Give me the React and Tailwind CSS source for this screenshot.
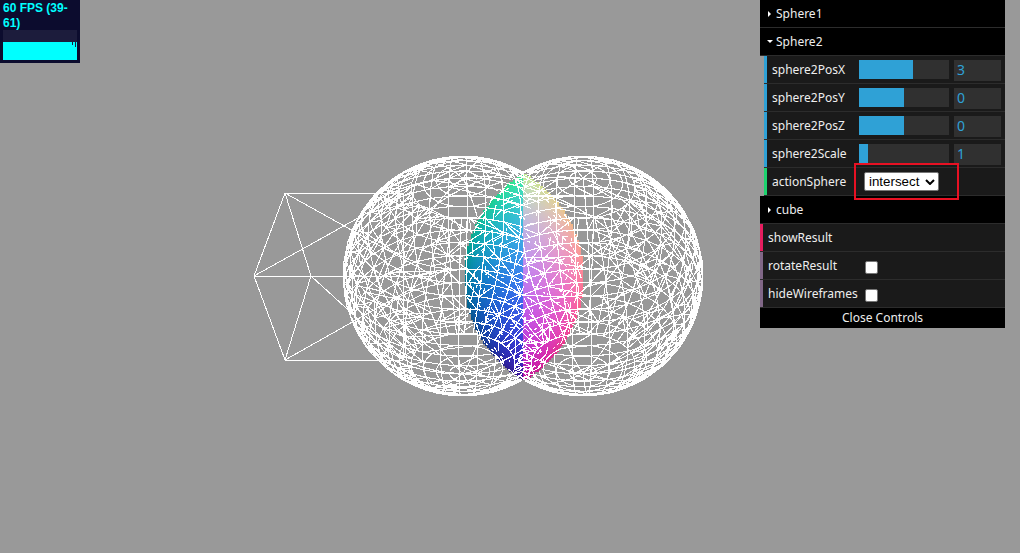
import { useMemo } from 'react';

const R = 120;
const C1 = 463;
const C2 = 583;
const CY = 276;

const rows = [
    { label: 'sphere2PosX', value: '3', fill: 'w-[54px]' },
    { label: 'sphere2PosY', value: '0', fill: 'w-[45px]' },
    { label: 'sphere2PosZ', value: '0', fill: 'w-[45px]' },
    { label: 'sphere2Scale', value: '1', fill: 'w-[9px]' },
];

// small seeded random so the mesh is the same on every render
const makeRandom = (seed) => () => {
    seed = (seed * 16807) % 2147483647;
    return seed / 2147483647;
};

const sphereEdges = (cx, seed) => {
    const rnd = makeRandom(seed);
    const W = 40;
    const H = 28;
    const tilt = 0.62;
    const spin = seed % 7;
    const pt = (i, j) => {
        const th = (j / H) * Math.PI;
        const ph = (i / W) * Math.PI * 2 + spin * 0.07;
        const x = Math.sin(th) * Math.cos(ph);
        const y = Math.cos(th);
        const z = Math.sin(th) * Math.sin(ph);
        const y2 = y * Math.cos(tilt) - z * Math.sin(tilt);
        const z2 = y * Math.sin(tilt) + z * Math.cos(tilt);
        return [cx + x * R, CY + y2 * R, z2 * R];
    };
    const edges = [];
    for (let j = 0; j < H; j++) {
        const nearPole = j < 4 || j >= H - 4;
        for (let i = 0; i < W; i++) {
            const a = pt(i, j);
            const b = pt(i + 1, j);
            const c = pt(i, j + 1);
            const d = pt(i + 1, j + 1);
            if (j > 0) edges.push([a, b]);
            // no star at the poles, the rings just bunch up there
            if (!nearPole || i % 6 === 0) edges.push([a, c]);
            if (!nearPole) {
                if (rnd() > 0.5) edges.push(rnd() > 0.5 ? [a, d] : [b, c]);
                // the csg cut leaves long thin triangles around
                if (rnd() > 0.88) edges.push([a, pt(i + 3, j + 1)]);
            }
        }
    }
    return edges;
};

const buildWire = () => {
    const rnd = makeRandom(4242);
    let d = '';
    const walk = (edges, self) => {
        edges.forEach(([a, b]) => {
            const len = Math.hypot(b[0] - a[0], b[1] - a[1]);
            const steps = Math.max(1, Math.ceil(len / 3));
            let open = false;
            for (let s = 0; s <= steps; s++) {
                const t = s / steps;
                const x = a[0] + (b[0] - a[0]) * t;
                const y = a[1] + (b[1] - a[1]) * t;
                const z = a[2] + (b[2] - a[2]) * t;
                const d1 = R * R - (x - C1) ** 2 - (y - CY) ** 2;
                const d2 = R * R - (x - C2) ** 2 - (y - CY) ** 2;
                let show = true;
                if (d1 > 0 && d2 > 0) {
                    const z1 = Math.sqrt(d1);
                    const z2 = Math.sqrt(d2);
                    const lens = Math.min(z1, z2);
                    if (z < lens - 2) show = false;
                    else if ((self === 1 ? z1 : z2) === lens && rnd() > 0.55) show = false;
                }
                if (show) {
                    d += `${open ? 'L' : 'M'}${x.toFixed(1)} ${y.toFixed(1)}`;
                    open = true;
                } else {
                    open = false;
                }
            }
        });
    };
    walk(sphereEdges(C1, 11), 1);
    walk(sphereEdges(C2, 29), 2);
    return d;
};

// normal material look: colour comes from the normal of the nearer sphere
const buildLens = () => {
    const cells = [];
    for (let y = 172; y < 381; y += 2) {
        for (let x = 463; x < 584; x += 2) {
            const d1 = R * R - (x - C1) ** 2 - (y - CY) ** 2;
            const d2 = R * R - (x - C2) ** 2 - (y - CY) ** 2;
            if (d1 <= 0 || d2 <= 0) continue;
            const cx = x < 523 ? C2 : C1;
            const nx = (x - cx) / R;
            const ny = (CY - y) / R;
            const nz = Math.sqrt(Math.max(0, 1 - nx * nx - ny * ny));
            const c = (v) => Math.round((v * 0.5 + 0.5) * 255);
            cells.push({ x, y, fill: `rgb(${c(nx)},${c(ny)},${c(nz)})` });
        }
    }
    return cells;
};

const Scene = () => {
    const wire = useMemo(buildWire, []);
    const cells = useMemo(buildLens, []);
    return (
        <svg width="1020" height="553" className="block" shapeRendering="crispEdges">
            <path
                d="M285 193L254 276L285 360L311 276L285 193M285 193H403M285 360H403M254 276H434M403 193V360M254 276L403 193M285 193L434 276M311 276L403 360M285 360L434 276"
                stroke="#fff"
                strokeWidth="1"
                fill="none"
            />
            {cells.map((c) => (
                <rect key={`${c.x}-${c.y}`} x={c.x} y={c.y} width="2" height="2" fill={c.fill} />
            ))}
            <path d={wire} stroke="#fff" strokeWidth="1.1" fill="none" />
        </svg>
    );
};

const Caret = ({ open }) => (
    <span className="flex w-[9px] shrink-0 items-center">
        {open ? (
            <span className="h-0 w-0 border-x-[3px] border-t-[3px] border-x-transparent border-t-white" />
        ) : (
            <span className="ml-[1px] h-0 w-0 border-y-[3px] border-l-[3px] border-y-transparent border-l-white" />
        )}
    </span>
);

const FolderTitle = ({ title, open }) => (
    <div className="flex h-[28px] items-center border-b border-[#2c2c2c] bg-black pl-[7px] text-[#eee]">
        <Caret open={open} />
        <span>{title}</span>
    </div>
);

const Row = ({ label, border, inset, children }) => (
    <div className={`flex h-[28px] border-b border-[#2c2c2c] bg-[#1a1a1a] ${inset ? 'ml-[4px]' : ''}`}>
        <div className={`flex w-[3px] shrink-0 ${border}`} />
        <div className="flex min-w-0 flex-1 items-center pl-[5px] text-[#eee]">
            <span className={`shrink-0 whitespace-nowrap ${inset ? 'w-[87px]' : 'w-[96px]'}`}>{label}</span>
            {children}
        </div>
    </div>
);

const Check = () => (
    <input type="checkbox" readOnly className="ml-[1px] mt-[3px] h-[13px] w-[13px] appearance-none rounded-[2px] border border-[#767676] bg-white" />
);

const Controls = () => (
    <div className="absolute left-[760px] top-0 w-[245px] font-['Noto_Sans',sans-serif] text-[12px] leading-none">
        <FolderTitle title="Sphere1" />
        <FolderTitle title="Sphere2" open />
        {rows.map((r) => (
            <Row key={r.label} label={r.label} border="bg-[#2fa1d6]" inset>
                <div className="mt-[4px] flex items-start gap-[5px] self-start">
                    <div className="h-[19px] w-[90px] bg-[#303030]">
                        <div className={`h-full bg-[#2fa1d6] ${r.fill}`} />
                    </div>
                    <div className="flex h-[21px] w-[47px] items-center bg-[#303030] pb-[2px] pl-[3px] text-[14px] text-[#2fa1d6]">{r.value}</div>
                </div>
            </Row>
        ))}
        <Row label="actionSphere" border="bg-[#1ed36f]" inset>
            <div className="ml-[5px] flex h-[19px] w-[75px] items-center justify-between rounded-[2px] border border-[#767676] bg-white pl-[4px] pr-[3px] font-['Liberation_Sans',sans-serif] text-[13.33px] text-black">
                <span>intersect</span>
                <svg width="10" height="6" viewBox="0 0 10 6" fill="none" stroke="#000" strokeWidth="2">
                    <path d="M1 1l4 4l4-4" />
                </svg>
            </div>
        </Row>
        <FolderTitle title="cube" />
        <Row label="showResult" border="bg-[#e61d5f]" />
        <Row label="rotateResult" border="bg-[#806787]">
            <Check />
        </Row>
        <Row label="hideWireframes" border="bg-[#806787]">
            <Check />
        </Row>
        <div className="flex h-[20px] items-center justify-center bg-black text-[#eee]">Close Controls</div>
        <div className="absolute left-[94px] top-[163px] h-[37px] w-[105px] border-2 border-[#e81123]" />
    </div>
);

const Stats = () => (
    <div className="absolute left-0 top-0 h-[63px] w-[80px] bg-[#0c0c2e] px-[3px] font-['Liberation_Sans',sans-serif] text-[12px] font-bold leading-[15px] text-[#0ff]">
        <div className="h-[30px] pt-[1px]">60 FPS (39-61)</div>
        <div className="relative h-[30px] w-[74px] bg-[#1c1c3c]">
            <div className="absolute inset-x-0 bottom-0 h-[18px] bg-[#0ff]" />
            <div className="absolute left-[69px] top-[12px] h-[3px] w-[1px] bg-[#1c1c3c]" />
            <div className="absolute left-[72px] top-[12px] h-[5px] w-[1px] bg-[#1c1c3c]" />
        </div>
    </div>
);

const App = () => (
    <div className="relative h-[553px] w-full overflow-hidden bg-[#999]">
        <Scene />
        <Stats />
        <Controls />
    </div>
);

export default App;
